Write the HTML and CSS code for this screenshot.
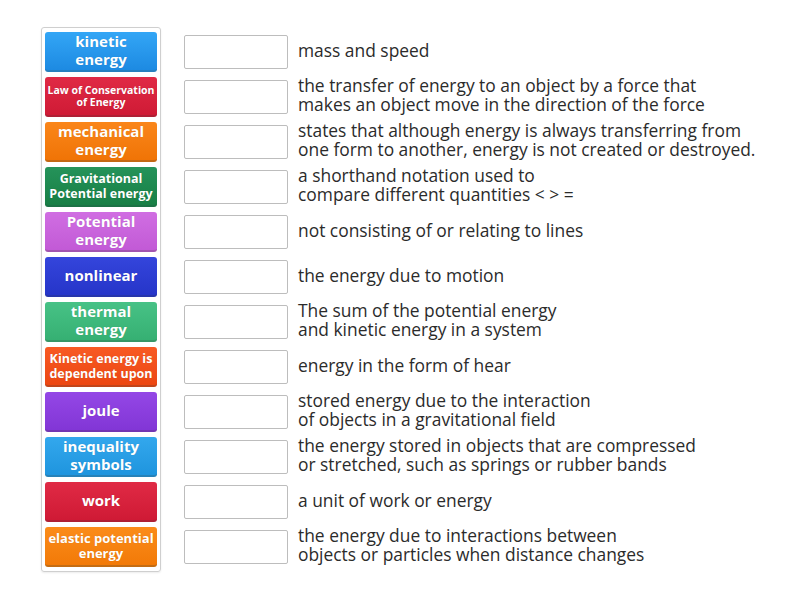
FILE: index.html
```html
<!DOCTYPE html>
<html>
<head>
<meta charset="utf-8">
<link rel="stylesheet" href="styles.css">
</head>
<body>
<div class="page">
  <div class="bank">
    <div class="tile c-blue">kinetic<br>energy</div>
    <div class="tile c-red xs">Law of Conservation<br>of Energy</div>
    <div class="tile c-orange">mechanical<br>energy</div>
    <div class="tile c-green sm">Gravitational<br>Potential energy</div>
    <div class="tile c-pink">Potential<br>energy</div>
    <div class="tile c-navy">nonlinear</div>
    <div class="tile c-mint">thermal<br>energy</div>
    <div class="tile c-redorange sm">Kinetic energy is<br>dependent upon</div>
    <div class="tile c-purple">joule</div>
    <div class="tile c-sky">inequality<br>symbols</div>
    <div class="tile c-red">work</div>
    <div class="tile c-orange2 md">elastic potential<br>energy</div>
  </div>
  <div class="rows">
    <div class="row"><div class="slot"></div><div class="desc">mass and speed</div></div>
    <div class="row"><div class="slot"></div><div class="desc">the transfer of energy to an object by a force that<br>makes an object move in the direction of the force</div></div>
    <div class="row"><div class="slot"></div><div class="desc">states that although energy is always transferring from<br>one form to another, energy is not created or destroyed.</div></div>
    <div class="row"><div class="slot"></div><div class="desc">a shorthand notation used to<br>compare different quantities &lt; &gt; =</div></div>
    <div class="row"><div class="slot"></div><div class="desc">not consisting of or relating to lines</div></div>
    <div class="row"><div class="slot"></div><div class="desc">the energy due to motion</div></div>
    <div class="row"><div class="slot"></div><div class="desc">The sum of the potential energy<br>and kinetic energy in a system</div></div>
    <div class="row"><div class="slot"></div><div class="desc">energy in the form of hear</div></div>
    <div class="row"><div class="slot"></div><div class="desc">stored energy due to the interaction<br>of objects in a gravitational field</div></div>
    <div class="row"><div class="slot"></div><div class="desc">the energy stored in objects that are compressed<br>or stretched, such as springs or rubber bands</div></div>
    <div class="row"><div class="slot"></div><div class="desc">a unit of work or energy</div></div>
    <div class="row"><div class="slot"></div><div class="desc">the energy due to interactions between<br>objects or particles when distance changes</div></div>
  </div>
</div>
</body>
</html>
```
FILE: styles.css
```css
html, body {
  margin: 0;
  padding: 0;
  background: #ffffff;
}
body {
  font-family: "Open Sans", "Liberation Sans", sans-serif;
  width: 800px;
  height: 600px;
  overflow: hidden;
}
.page {
  display: flex;
  align-items: flex-start;
  padding: 27px 0 0 41px;
}
.bank {
  width: 120px;
  box-sizing: border-box;
  border: 1px solid #cfcfcf;
  border-radius: 3px;
  padding: 4px 3px 4px 3px;
  display: flex;
  flex-direction: column;
  gap: 5px;
  box-shadow: 0 1px 2px rgba(0,0,0,0.08);
}
.tile {
  height: 40px;
  box-sizing: border-box;
  border-radius: 3px;
  border-bottom: 2px solid rgba(0,0,0,0.22);
  color: #fff;
  font-weight: 700;
  font-size: 15px;
  line-height: 18px;
  display: flex;
  align-items: center;
  justify-content: center;
  text-align: center;
  white-space: nowrap;
  text-shadow: 0 0 1px rgba(0,0,0,0.15);
  padding-bottom: 2px;
}
.tile.sm {
  font-size: 12.5px;
  line-height: 15px;
  padding-bottom: 0;
}
.tile.md {
  font-size: 13px;
  line-height: 15px;
  padding-bottom: 0;
}
.tile.xs {
  font-size: 10.5px;
  line-height: 12px;
  padding-bottom: 0;
}
.c-blue { background: linear-gradient(#33a6f6, #1d8ae2); }
.c-red { background: linear-gradient(#e02a45, #cf1a35); }
.c-orange { background: linear-gradient(#fa861a, #f07406); }
.c-green { background: linear-gradient(#25935a, #187f45); }
.c-pink { background: linear-gradient(#d06ee2, #c25ad6); }
.c-navy { background: linear-gradient(#3445dc, #2635c9); }
.c-mint { background: linear-gradient(#47c286, #36b073); }
.c-redorange { background: linear-gradient(#f85a24, #ec4712); }
.c-purple { background: linear-gradient(#9447e6, #8236d6); }
.c-sky { background: linear-gradient(#33a8ed, #1f95de); }
.c-orange2 { background: linear-gradient(#fb8c1a, #f27a08); }

.rows {
  margin-left: 23px;
  margin-top: 5px;
  display: flex;
  flex-direction: column;
  gap: 5px;
}
.row {
  height: 40px;
  display: flex;
  align-items: center;
}
.slot {
  width: 104px;
  height: 34px;
  box-sizing: border-box;
  border: 1px solid #bdbdbd;
  border-radius: 2px;
  background: #fff;
  flex: none;
}
.desc {
  margin-left: 10px;
  font-size: 17.4px;
  line-height: 19px;
  color: #2b2b2b;
  white-space: nowrap;
  margin-top: -4px;
}
```
